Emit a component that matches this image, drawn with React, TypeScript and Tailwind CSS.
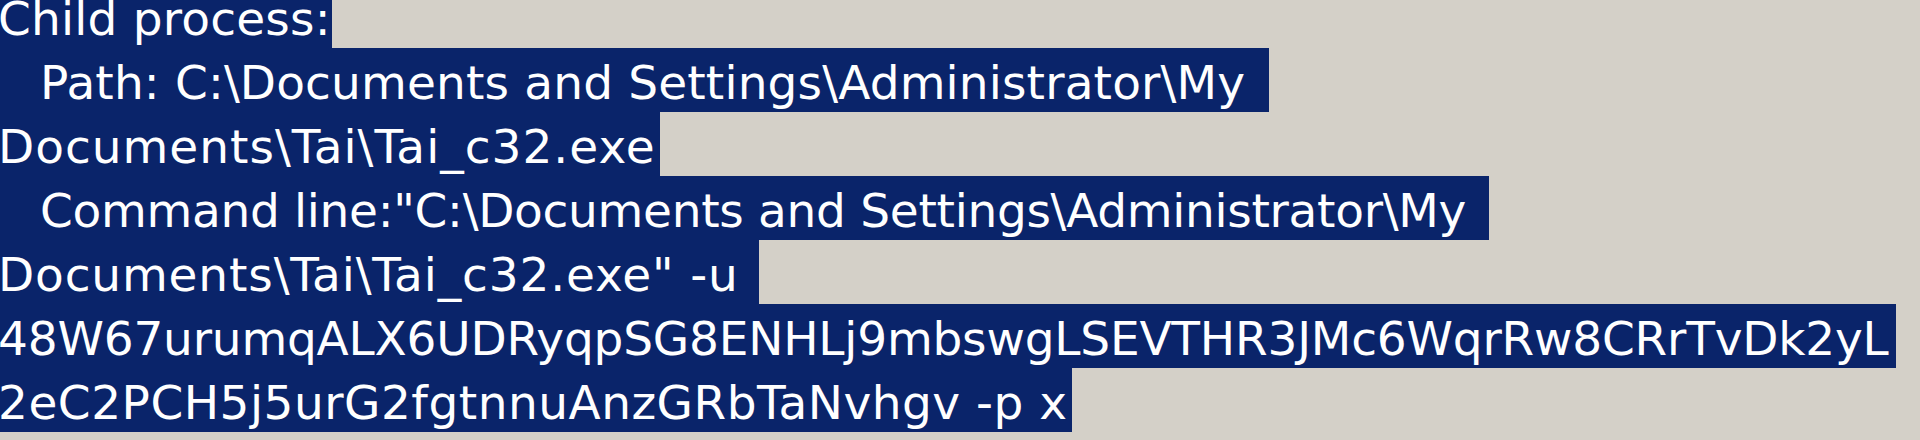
import React from 'react';

type Line = { text: string; width: string; indent?: boolean; track: string };

const lines: Line[] = [
  { text: 'Child process:', width: 'w-[332px]', track: 'tracking-[0.2px]' },
  { text: 'Path: C:\\Documents and Settings\\Administrator\\My', width: 'w-[1269px]', indent: true, track: 'tracking-[0.15px]' },
  { text: 'Documents\\Tai\\Tai_c32.exe', width: 'w-[660px]', track: 'tracking-[1px]' },
  { text: 'Command line:"C:\\Documents and Settings\\Administrator\\My', width: 'w-[1489px]', indent: true, track: 'tracking-[-0.3px]' },
  { text: 'Documents\\Tai\\Tai_c32.exe" -u', width: 'w-[759px]', track: 'tracking-[0.85px]' },
  { text: '48W67urumqALX6UDRyqpSG8ENHLj9mbswgLSEVTHR3JMc6WqrRw8CRrTvDk2yL', width: 'w-[1896px]', track: 'tracking-[-0.2px]' },
  { text: '2eC2PCH5j5urG2fgtnnuAnzGRbTaNvhgv -p x', width: 'w-[1072px]', track: 'tracking-[0.5px]' },
];

const App: React.FC = () => {
  return (
    <div className="w-[1920px] h-[440px] overflow-hidden bg-[#d4d0c8]">
      <div className="mt-[-16px] flex flex-col font-['DejaVu_Sans',sans-serif] text-[47px] text-white">
        {lines.map((line, i) => (
          <div key={i} className="h-[64px]">
            <div className={`${line.width} ${line.track} h-[64px] bg-[#0a246a] pt-[6px] leading-[58px] whitespace-pre`}>
              <span className={line.indent ? 'ml-[40px]' : 'ml-[-2px]'}>{line.text}</span>
            </div>
          </div>
        ))}
      </div>
    </div>
  );
};

export default App;
